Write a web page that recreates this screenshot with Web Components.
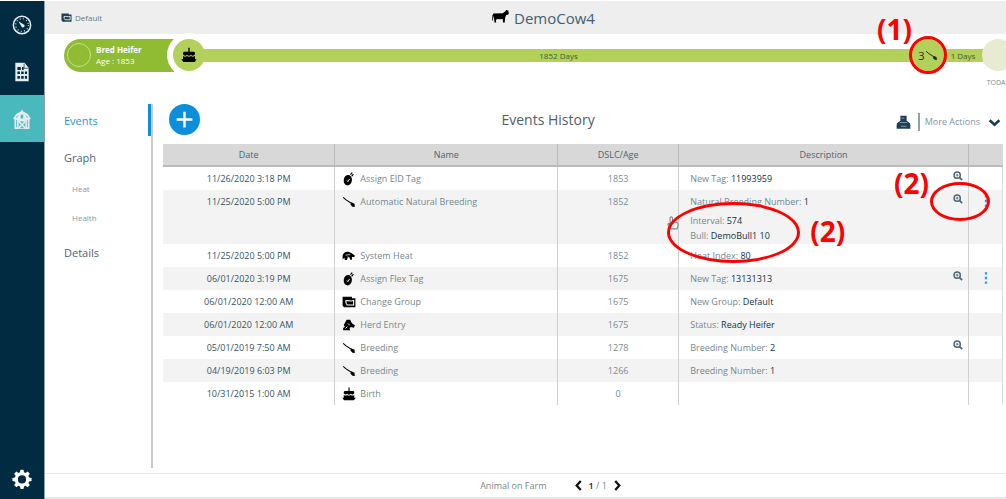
<!DOCTYPE html>
<html lang="en">
<head>
<meta charset="utf-8">
<title>DemoCow4 - Events History</title>
<style>
  body { margin: 0; background: #fff; font: 9px/14px "Open Sans", "Noto Sans", sans-serif; color: #3b5a68; overflow-x: hidden; }
</style>
</head>
<body>
<farm-app></farm-app>
<script>
const ICONS = {
  gauge: '<circle cx="12" cy="12" r="10.4" fill="none" stroke="currentColor" stroke-width="1.8"/><circle cx="12" cy="12" r="7.6" fill="none" stroke="currentColor" stroke-width="1.4" stroke-dasharray="1.2 2.8"/><path d="M7.6 7.4l6 3.6a2 2 0 1 1-2.4 2.4z" fill="currentColor"/>',
  report: '<path d="M4 1h11l5 6v16H4z" fill="currentColor"/><path d="M6.500 6h4v3.500h-4zm5.500 0h2v3.500h-2zM6.500 11.500h3v3h-3zm4.500 0h3v3h-3zm4.500 0h2.500v3h-2.500zM6.500 16.700h3v3.300h-3zm4.500 0h3v3.300h-3zm4.500 0h2.500v3.300h-2.500z" fill="#002b40"/><path d="M14.500 2v5.500H20" fill="none" stroke="#002b40" stroke-width=".8"/>',
  barn: '<path d="M12 .5l1.500 2.500 5.500 3 3.500 5.500-1 1-.5-.5V24H3V12l-.5.5-1-1L5 6l5.500-3z" fill="currentColor"/><path d="M10.500 7h3v4.500h-3zM8 15h8v8H8z" fill="#4ab9bd"/><path d="M8 15l8 8M16 15l-8 8" stroke="currentColor" stroke-width="2"/><path d="M7 8l-2 2.500M17 8l2 2.500M5.500 13v9M18.500 13v9" stroke="#4ab9bd" stroke-width="1"/>',
  gear: '<path fill="currentColor" fill-rule="evenodd" d="M10.200 1h3.600l.6 3 1.900.8 2.500-1.700 2.600 2.600-1.700 2.500.8 1.900 3 .6v3.600l-3 .6-.8 1.900 1.700 2.500-2.600 2.600-2.500-1.700-1.900.8-.6 3h-3.600l-.6-3-1.900-.8-2.500 1.700-2.600-2.600 1.700-2.500-.8-1.900-3-.6v-3.600l3-.6.8-1.900-1.700-2.500 2.600-2.600 2.500 1.700 1.900-.8zM12 7.600a4.900 4.900 0 1 0 0 9.800 4.900 4.900 0 0 0 0-9.800z"/>',
  group: '<path d="M1 3h16v2.500h6V21H3.500L1 18z" fill="currentColor"/><path d="M6.500 10c4-1.500 8 1.500 13.500-.5V17h-11l-2-3z" fill="none" stroke="#fff" stroke-width="1.800"/>',
  cow: '<path fill="currentColor" d="M2 6.500L15 6l4-3 1-2 1.500 1.200L23.500 2l-.5 2 1 2-1.500 2-2.500.3-1.500 4L18 19h-2.500l-.3-5-5.200.5-3-.5-1.500 2 .5 3H3.500L3 14l-1-5-.6 7L.3 17 .5 9z"/>',
  cake: '<path fill="currentColor" d="M11 1h2v6h5.500c1.500 0 2.500 1 2.500 2.500V11c-2 2.500-4 2.500-6 .7-2 2-4 2-6 0-2 1.800-4 1.800-6-.7V9.500C3 8 4 7 5.500 7H11zM3 13.500c2.200 1.400 4.200 1.200 6 0 2 1.500 4 1.500 6 0 1.800 1.200 3.800 1.400 6 0V18.500h2.500l-3 4h-17l-3-4H3z"/>',
  tag: '<ellipse cx="10" cy="14" rx="7" ry="9" transform="rotate(8 10 14)" fill="currentColor"/><path d="M14.500 4.500l3-3.500M16.500 7.500l3-4" stroke="currentColor" stroke-width="2"/><path d="M8.500 14.500l1.500 2 3-4.500" fill="none" stroke="#fff" stroke-width="1.600"/>',
  breed: '<path d="M2 4l4.500 4L17 15" fill="none" stroke="currentColor" stroke-width="1.800"/><path d="M16 12.500l5.500 2.500.5 5.500-4-.5-3.500-3.500z" fill="currentColor"/>',
  heat: '<path fill="currentColor" d="M1 18V12c1-6 6-8 11-7l4 2 6 4-1 3-4-.5v5h-3l-1-4-3-.5-1.500 5H5L4 15z"/><path d="M6 10.500l8-1M10 13l1 2" stroke="#fff" stroke-width="1.200"/>',
  entry: '<path fill="currentColor" d="M8 3h6l3 6 5 3.500-1.500 4-5.500-1-2 2 1 3.500H2V17l3-2-2-3z"/><path d="M10.500 9.500l2.500 3M6 18l3-3" stroke="#fff" stroke-width="1.600"/>',
  print: '<path fill="currentColor" d="M7 1h10v8l4 3q2 1 2 4v6H1v-6q0-3 2-4l4-3z"/><path d="M9 5h4M6 12h12M8 18h9" stroke="#b8cad2" stroke-width="1"/>',
  zoom: '<circle cx="10" cy="10" r="7.500" fill="none" stroke="currentColor" stroke-width="3.500"/><path d="M16 16l6 6" stroke="currentColor" stroke-width="4"/><path d="M10 6.500v7M6.500 10h7" stroke="currentColor" stroke-width="2"/>',
  down: '<path d="M3 8l9 8 9-8" fill="none" stroke="currentColor" stroke-width="5"/>',
  prev: '<path d="M17 2L8 12l9 10" fill="none" stroke="currentColor" stroke-width="5"/>',
  next: '<path d="M7 2l9 10-9 10" fill="none" stroke="currentColor" stroke-width="5"/>',
  plus: '<path d="M12 3v18M3 12h18" fill="none" stroke="currentColor" stroke-width="2.800"/>',
  dots: '<path d="M10 2h4v4h-4zm0 8h4v4h-4zm0 8h4v4h-4z" fill="currentColor"/>',
  hand: '<path d="M7 14V3q2-3 4 0v7l7 1q3 1 3 4l-2 7H9l-6-8q1-2 4 0z" fill="#fff" stroke="currentColor" stroke-width="2"/>'
};
const define = (name, html, setup) => {
  const template = document.createElement('template');
  template.innerHTML = html;
  customElements.define(name, class extends HTMLElement {
    connectedCallback() {
      if (this.shadowRoot) return;
      this.attachShadow({ mode: 'open' }).append(template.content.cloneNode(true));
      if (setup) setup(this, this.shadowRoot);
    }
  });
};

define('ui-icon', `<style>
  :host { display: inline-block; flex: none; width: var(--size, 14px); height: var(--size, 14px); }
  svg { display: block; width: 100%; height: 100%; }
</style><svg viewBox="0 0 24 24" aria-hidden="true"></svg>`,
(el, root) => { root.querySelector('svg').innerHTML = ICONS[el.getAttribute('name')]; });

/* Red marker: an outline and, beside it, its number */
define('call-out', `<style>
  :host { position: absolute; pointer-events: none; z-index: 3; color: #f00; font: 700 28px/32px "Open Sans", sans-serif; }
  :host([ring]) { box-sizing: border-box; border: 3px solid #f00; border-radius: 50%; }
</style><slot></slot>`);

define('side-bar', `<style>
  :host { background: #002b40; border-right: 1px solid #8fa0a8; color: #fff; }
  nav { display: flex; flex-direction: column; height: 100%; }
  a { display: flex; align-items: center; justify-content: center; height: 47px; color: #e6edf0; --size: 20px; }
  a.active { background: #4ab9bd; }
  a.last { margin-top: auto; height: 40px; color: #fff; }
</style><nav aria-label="Main">
  <a href="#dashboard" aria-label="Dashboard"><ui-icon name="gauge"></ui-icon></a>
  <a href="#reports" aria-label="Reports"><ui-icon name="report"></ui-icon></a>
  <a href="#farm" class="active" aria-label="Farm"><ui-icon name="barn"></ui-icon></a>
  <a href="#settings" class="last" aria-label="Settings"><ui-icon name="gear"></ui-icon></a>
</nav>`);

define('page-header', `<style>
  :host { display: grid; grid-template-columns: 12fr auto 11fr; align-items: center; height: 33px; padding: 0 16px; background: #eee; }
  .group { display: flex; align-items: center; gap: 3px; color: #667a84; font-size: 8px; --size: 11px; }
  .group ui-icon { color: #1c4054; }
  h1 { display: flex; align-items: center; gap: 5px; margin: 0; font-size: 15px; line-height: 20px; font-weight: 400; color: #416070; --size: 17px; }
  h1 ui-icon { color: #000; }
</style>
<div class="group"><ui-icon name="group"></ui-icon><slot name="group"></slot></div>
<h1><ui-icon name="cow"></ui-icon><slot></slot></h1>`);

define('time-line', `<style>
  :host { display: flex; align-items: center; height: 34px; padding: 4px 0 0 19px; margin-right: -8px; color: #3f6030; font-size: 8px; line-height: 11px; }
  .status { box-sizing: border-box; flex: none; display: flex; align-items: center; gap: 5px; width: 110px; height: 33px; padding-left: 3px; border-radius: 17px 0 0 17px; background: #90bc34; color: #fff; }
  .status i { box-sizing: border-box; width: 24px; height: 24px; border: 1px solid #c9e08e; border-radius: 50%; }
  b { display: block; }
  .node { position: relative; flex: none; display: flex; align-items: center; justify-content: center; width: 32px; height: 32px; border-radius: 50%; background: #b2d05a; color: #1c2c10; font-size: 11px; --size: 13px; }
  .birth { margin-left: -1px; box-shadow: 0 0 0 6px #fff; color: #000; --size: 16px; }
  .bar { position: relative; flex: 1; height: 13px; background: #b2d05a; text-align: center; margin: 0 -2px; line-height: 13px; }
  .short { flex: 0 0 40px; margin: 0 -1px; text-align: center; }
  .today { background: #e6ebd2; }
  .today span { position: absolute; top: 38px; font-size: 7px; color: #7c8a90; }
</style>
<div class="status"><i></i><div><b><slot name="status"></slot></b><slot name="age"></slot></div></div>
<div class="node birth"><ui-icon name="cake"></ui-icon></div>
<div class="bar">1852 Days</div>
<div class="node">3<ui-icon name="breed"></ui-icon>
  <call-out ring style="inset:-3px"></call-out><call-out style="left:-35px;top:-26px">(1)</call-out></div>
<div class="bar short">1 Days</div>
<div class="node today"><span>TODAY</span></div>`);

define('section-nav', `<style>
  :host { display: block; width: 106px; flex: none; border-right: 2px solid #ccc; }
  nav { display: flex; flex-direction: column; }
  a { box-sizing: border-box; padding-left: 19px; color: #4d6673; text-decoration: none; font-size: 11px; line-height: 18px; font-weight: 500; margin-bottom: 13px; }
  a.active { height: 32px; line-height: 34px; border-right: 3px solid #0c8fdb; color: #2a98d4; }
  a.sub { padding-left: 27px; font-size: 8px; font-weight: 400; color: #8a989f; margin-bottom: 11px; }
  a.end { margin-top: 6px; }
</style><nav aria-label="Sections">
  <a class="active" href="#events">Events</a><a href="#graph">Graph</a>
  <a class="sub" href="#heat">Heat</a><a class="sub" href="#health">Health</a><a class="end" href="#details">Details</a>
</nav>`);

define('events-toolbar', `<style>
  :host { display: grid; grid-template-columns: 9fr auto 11fr; align-items: center; height: 31px; padding: 0 2px 0 6px; }
  button { display: flex; align-items: center; border: 0; padding: 0; background: none; font: inherit; color: #1c4054; }
  .add { justify-content: center; width: 31px; height: 31px; border-radius: 50%; background: #0c8fdb; color: #fff; --size: 21px; }
  h2 { margin: 0; font-size: 14px; line-height: 20px; font-weight: 500; color: #525e64; }
  .actions { display: flex; align-items: center; justify-content: flex-end; gap: 7px; margin-top: 5px; }
  .print { --size: 15px; }
  .more { gap: 8px; padding-left: 5px; height: 18px; border-left: 2px solid #8ba0aa; color: #8495a0; --size: 13px; }
  .more ui-icon { color: #173f55; }
</style>
<button class="add" aria-label="Add event"><ui-icon name="plus"></ui-icon></button>
<h2><slot></slot></h2>
<div class="actions"><button class="print" aria-label="Print"><ui-icon name="print"></ui-icon></button>
<button class="more">More Actions <ui-icon name="down"></ui-icon></button></div>`);

const EVENTS = [
  ['11/26/2020 3:18 PM', 'tag', 'Assign EID Tag', '1853', [['New Tag:', '11993959']], 'z'],
  ['11/25/2020 5:00 PM', 'breed', 'Automatic Natural Breeding', '1852', [['Natural Breeding Number:', '1'], ['Interval:', '574'], ['Bull:', 'DemoBull1 10']], 'zmc'],
  ['11/25/2020 5:00 PM', 'heat', 'System Heat', '1852', [['Heat Index:', '80']], ''],
  ['06/01/2020 3:19 PM', 'tag', 'Assign Flex Tag', '1675', [['New Tag:', '13131313']], 'zm'],
  ['06/01/2020 12:00 AM', 'group', 'Change Group', '1675', [['New Group:', 'Default']], ''],
  ['06/01/2020 12:00 AM', 'entry', 'Herd Entry', '1675', [['Status:', 'Ready Heifer']], ''],
  ['05/01/2019 7:50 AM', 'breed', 'Breeding', '1278', [['Breeding Number:', '2']], 'z'],
  ['04/19/2019 6:03 PM', 'breed', 'Breeding', '1266', [['Breeding Number:', '1']], ''],
  ['10/31/2015 1:00 AM', 'cake', 'Birth', '0', [], '']
];
define('events-table', `<style>
  :host { display: block; }
  table { width: 100%; table-layout: fixed; border-collapse: separate; border-spacing: 0; }
  th { height: 21px; padding: 0; background: #d8d8d8; border-bottom: 2px solid #bbb; font-weight: 400; color: #4c6471; }
  td { height: 23px; padding: 0; vertical-align: top; line-height: 23px; text-align: center; color: #365565; }
  th + th, td + td { border-left: 1px solid #d0d0d0; }
  th + th { border-left-color: #bbb; }
  td:last-child { border-right: 1px solid #ddd; }
  tbody tr:nth-child(even) { background: #f3f3f3; }
  .date { width: 20.4%; } .name { width: 26.4%; } .age { width: 14.3%; } .menu { width: 34px; }
  .event { display: flex; align-items: center; gap: 4px; padding-left: 7px; color: #75888f; }
  .event ui-icon { color: #000; }
  td.days { color: #7a8c95; }
  td.info { position: relative; text-align: left; padding-left: 11px; color: #75888f; }
  td.info.tall { padding-bottom: 1px; }
  .info p { margin: 0; }
  .info p + p { line-height: 15px; }
  .info b { font-weight: 400; color: #0f3346; }
  button { border: 0; padding: 0; background: none; display: flex; }
  .look { position: absolute; top: 4px; right: 5px; color: #4e6773; --size: 10px; }
  .dots { margin: 4px auto; color: #24a1d8; --size: 14px; }
  .hand { position: absolute; left: -13px; top: 26px; color: #888; }
</style>
<table><thead><tr><th class="date">Date</th><th class="name">Name</th><th class="age">DSLC/Age</th><th>Description</th><th class="menu"></th></tr></thead><tbody></tbody></table>`,
(el, root) => {
  root.querySelector('tbody').innerHTML = EVENTS.map(([date, icon, name, age, info, flags]) => `<tr>
    <td>${date}</td><td><div class="event"><ui-icon name="${icon}"></ui-icon>${name}</div></td><td class="days">${age}</td>
    <td class="info${info.length > 1 ? ' tall' : ''}">${info.map(([k, v]) => `<p>${k} <b>${v}</b></p>`).join('')}
    ${flags.includes('z') ? '<button class="look" aria-label="View details"><ui-icon name="zoom"></ui-icon></button>' : ''}
    ${flags.includes('c') ? `<ui-icon class="hand" name="hand"></ui-icon>
      <call-out ring style="left:-12px;top:12px;width:133px;height:61px"></call-out><call-out style="left:131px;top:25px">(2)</call-out>
      <call-out ring style="right:-22px;top:-8px;width:60px;height:39px"></call-out><call-out style="right:39px;top:-23px">(2)</call-out>` : ''}</td>
    <td>${flags.includes('m') ? '<button class="dots" aria-label="Row menu"><ui-icon name="dots"></ui-icon></button>' : ''}</td></tr>`).join('');
});

define('page-footer', `<style>
  :host { display: flex; align-items: center; justify-content: center; height: 23px; margin-top: 5px; padding-left: 52px; border-top: 1px solid #e8e8e8; border-bottom: 2px solid #e8e8e8; color: #7b878c; }
  div { display: flex; align-items: center; gap: 5px; margin-left: 26px; }
  button { display: flex; padding: 0; border: 0; background: none; color: #111; --size: 11px; }
  b { color: #222; font-weight: 600; }
</style><span><slot></slot></span>
<div><button aria-label="Previous"><ui-icon name="prev"></ui-icon></button><span><b>1</b> / 1</span><button aria-label="Next"><ui-icon name="next"></ui-icon></button></div>`);

define('farm-app', `<style>
  :host { box-sizing: border-box; display: grid; grid-template-columns: 45px minmax(0, 1fr); min-height: 100vh; padding-top: 1px; }
  main { display: flex; flex-direction: column; min-width: 0; overflow: hidden; }
  .content { display: flex; flex: 1; margin-top: 32px; }
  .events { flex: 1; min-width: 0; padding: 0 3px 0 10px; }
  events-table { margin-top: 9px; }
</style>
<side-bar></side-bar>
<main>
  <page-header><span slot="group">Default</span>DemoCow4</page-header>
  <time-line><span slot="status">Bred Heifer</span><span slot="age">Age : 1853</span></time-line>
  <div class="content"><section-nav></section-nav>
    <section class="events"><events-toolbar>Events History</events-toolbar><events-table></events-table></section>
  </div>
  <page-footer>Animal on Farm</page-footer>
</main>`);
</script>
</body>
</html>
